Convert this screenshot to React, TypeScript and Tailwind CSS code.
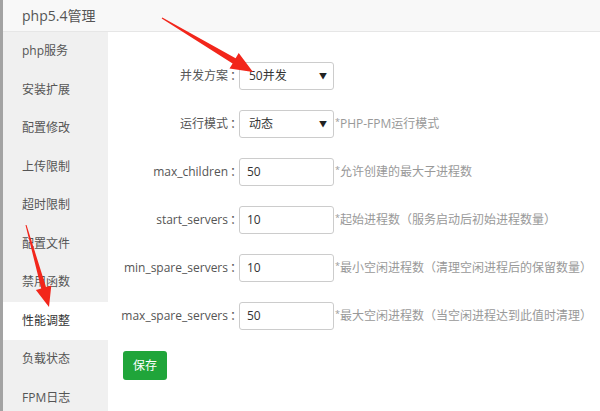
import React from "react";

const menu = [
  "php服务",
  "安装扩展",
  "配置修改",
  "上传限制",
  "超时限制",
  "配置文件",
  "禁用函数",
  "性能调整",
  "负载状态",
  "FPM日志",
];

const fields = [
  { label: "max_children", value: "50", hint: "允许创建的最大子进程数" },
  { label: "start_servers", value: "10", hint: "起始进程数（服务启动后初始进程数量）" },
  { label: "min_spare_servers", value: "10", hint: "最小空闲进程数（清理空闲进程后的保留数量）" },
  { label: "max_spare_servers", value: "50", hint: "最大空闲进程数（当空闲进程达到此值时清理）" },
];

function Label({ text }: { text: string }) {
  return (
    <div className="flex w-[131px] shrink-0 justify-end">
      <span>{text}</span>
      <span className="ml-[2px] w-[9px] overflow-visible whitespace-nowrap">：</span>
    </div>
  );
}

function Hint({ text }: { text: string }) {
  return (
    <span className="ml-px text-[12px] text-[#999]">
      <span className="text-[9px] align-top">*</span>
      {text}
    </span>
  );
}

function FakeSelect({ value }: { value: string }) {
  return (
    <div className="flex h-[28px] w-[95px] shrink-0 items-center justify-between rounded-[3px] border border-[#ccc] bg-white pl-[9px] pr-[6px] text-[12px] text-[#333]">
      <span>{value}</span>
      <span className="text-[8px] text-[#222]">▼</span>
    </div>
  );
}

export default function App() {
  return (
    <div
      className="relative flex h-[411px] w-[600px] overflow-hidden bg-white text-[#555]"
      style={{ fontFamily: '"Open Sans", "Noto Sans CJK SC", sans-serif' }}
    >
      {/* left edge strip */}
      <div className="w-[3px] shrink-0 bg-[#a3a3a3]" />

      <div className="flex flex-1 flex-col">
        {/* header */}
        <div className="flex h-[32px] shrink-0 items-center border-b border-[#e6e6e6] bg-[#f8f8f8] pl-[19px] text-[14px] text-[#555]">
          php5.4管理
        </div>

        <div className="flex flex-1">
          {/* sidebar */}
          <div className="flex w-[105px] shrink-0 flex-col bg-[#f0f0f0]">
            {menu.map((item) => (
              <div
                key={item}
                className={`flex h-[38.5px] shrink-0 items-center pl-[19px] text-[12px] ${
                  item === "性能调整" ? "bg-white text-[#333]" : "text-[#555]"
                }`}
              >
                {item}
              </div>
            ))}
          </div>

          {/* content */}
          <div className="flex flex-1 flex-col gap-[20px] pt-[30px] text-[12px]">
            <div className="flex h-[28px] items-center">
              <Label text="并发方案" />
              <FakeSelect value="50并发" />
            </div>
            <div className="flex h-[28px] items-center">
              <Label text="运行模式" />
              <FakeSelect value="动态" />
              <Hint text="PHP-FPM运行模式" />
            </div>
            {fields.map((f) => (
              <div key={f.label} className="flex h-[28px] items-center">
                <Label text={f.label} />
                <div className="flex h-[28px] w-[95px] shrink-0 items-center rounded-[3px] border border-[#ccc] bg-white pl-[7px] text-[12px] text-[#333]">
                  {f.value}
                </div>
                <Hint text={f.hint} />
              </div>
            ))}
            <div className="pl-[15px] pt-px">
              <button className="h-[29px] w-[44px] rounded-[3px] bg-[#20a53a] text-[12px] text-white">
                保存
              </button>
            </div>
          </div>
        </div>
      </div>

      {/* annotation arrows */}
      <svg className="pointer-events-none absolute left-0 top-0" width="600" height="411">
        <polygon
          fill="#f2261b"
          points="162.3,17.6 235.6,58.2 238.7,53.1 253,72 229.5,68.5 232.6,63.4 161.7,18.4"
        />
        <polygon
          fill="#f2261b"
          points="26.5,224.9 46,287 51.3,285.5 49,307 35.9,289.9 41.2,288.4 25.5,225.1"
        />
      </svg>
    </div>
  );
}
